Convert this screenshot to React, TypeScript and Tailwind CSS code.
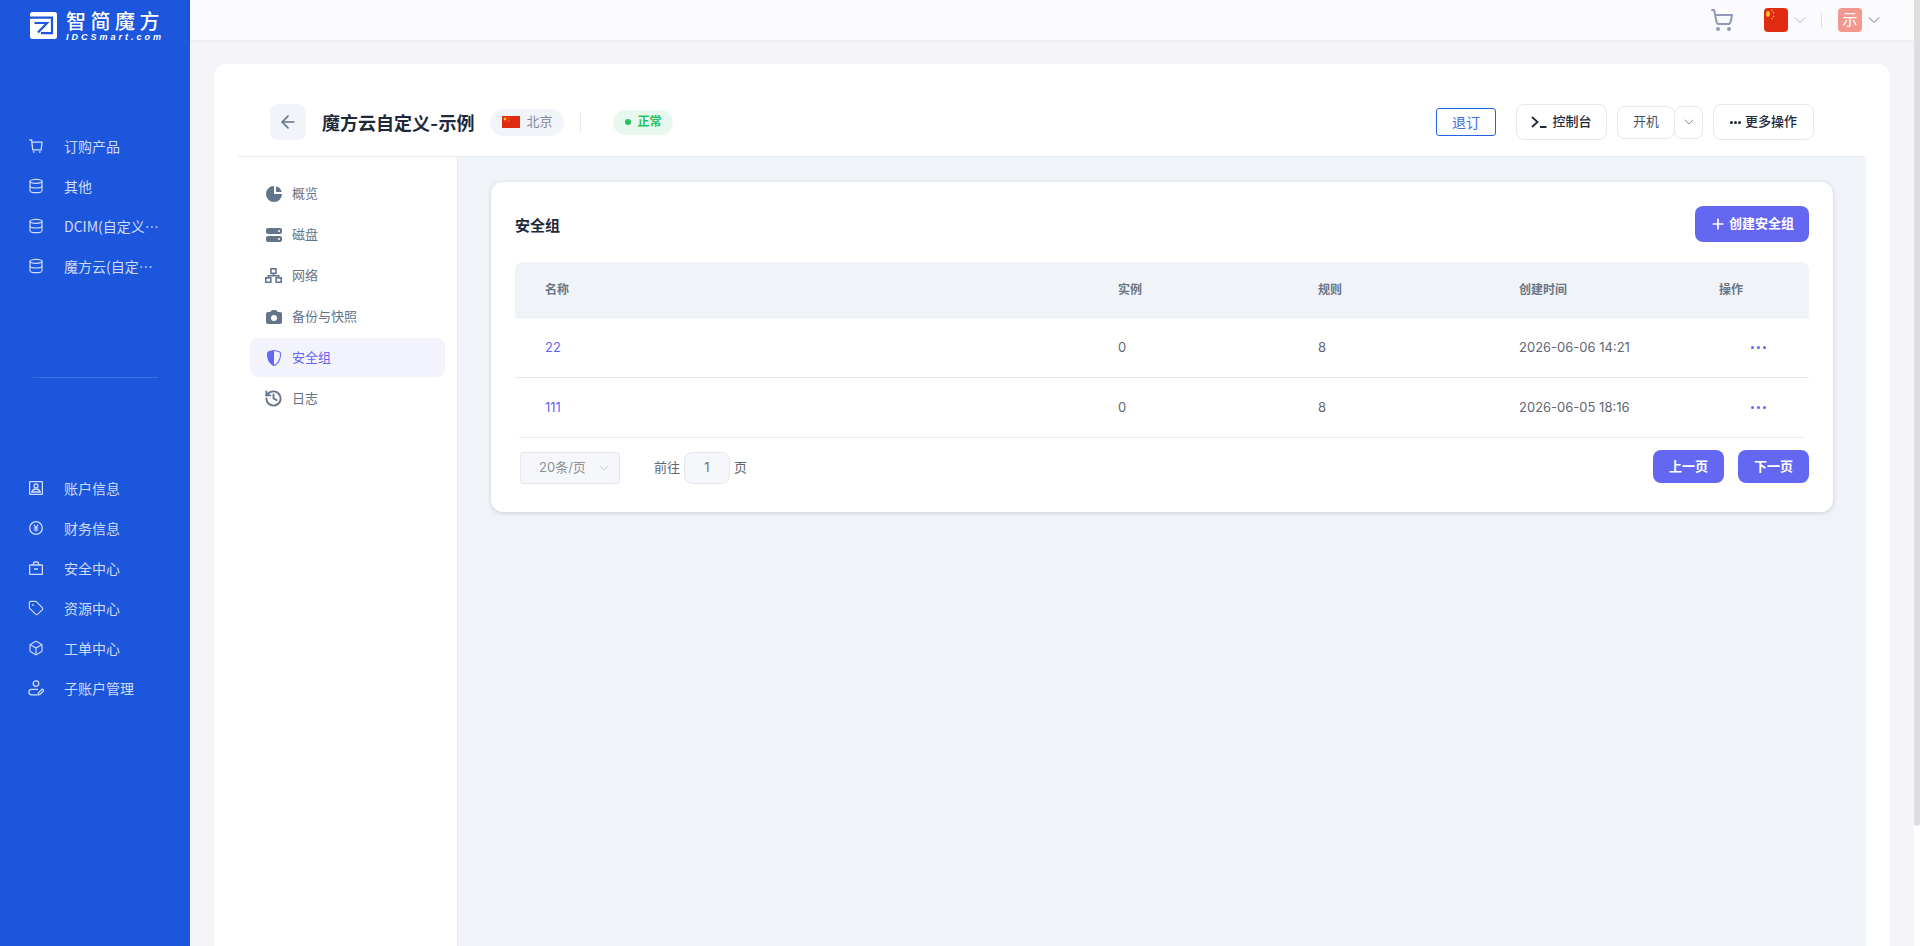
import { ArrowLeft, Box, ChevronDown, Database, History, Plus, ShoppingCart, Tag } from "lucide-react"
import { BsShieldShaded } from "react-icons/bs"
import { HiCamera, HiChartPie, HiServer } from "react-icons/hi"
import React from "react"

function CartThin() {
  return (
    <svg viewBox="0 0 14 14" className="h-[14px] w-[14px]" fill="none" stroke="currentColor" strokeWidth="1.3">
      <path d="M0.3 1H2.6L3.7 10.8H12.2L13 3.2H3" />
      <path d="M4 13h1.6M10 13h1.6" />
    </svg>
  )
}

function AccountIcon() {
  return (
    <svg viewBox="0 0 14 14" className="h-[14px] w-[14px]" fill="none" stroke="currentColor" strokeWidth="1.3">
      <rect x="0.6" y="0.6" width="12.8" height="12.8" rx="0.6" />
      <circle cx="7" cy="5" r="2" />
      <path d="M2.8 11c.6-2 2.2-3 4.2-3s3.6 1 4.2 3z" />
    </svg>
  )
}

function YenIcon() {
  return (
    <svg viewBox="0 0 14 14" className="h-[14px] w-[14px]" fill="none" stroke="currentColor" strokeWidth="1.3">
      <circle cx="7" cy="7" r="6.3" />
      <path d="M4.8 3.6L7 6.6l2.2-3M4.6 7h4.8M4.6 9h4.8M7 6.6v4" strokeWidth="1.1" />
    </svg>
  )
}

function SafeIcon() {
  return (
    <svg viewBox="0 0 14 14" className="h-[14px] w-[14px]" fill="none" stroke="currentColor" strokeWidth="1.3">
      <rect x="0.6" y="4" width="12.8" height="9.4" rx="0.6" />
      <path d="M4.4 4V2.6A1.6 1.6 0 0 1 6 1h2a1.6 1.6 0 0 1 1.6 1.6V4M5 8h4" />
    </svg>
  )
}

function SubAccountIcon() {
  return (
    <svg viewBox="0 0 16 16" className="h-[16px] w-[16px] shrink-0" fill="none" stroke="currentColor" strokeWidth="1.3">
      <circle cx="8" cy="3.6" r="2.8" />
      <path d="M10 9.4H3.6a2.7 2.7 0 0 0 0 5.4H9" />
      <path d="M10 14.8l.4-2 3.2-3.2a1 1 0 0 1 1.6 1.6L12 14.4z" />
    </svg>
  )
}

function NetworkIcon() {
  return (
    <svg viewBox="0 0 17 15" className="h-[15px] w-[17px] shrink-0" fill="none" stroke="currentColor" strokeWidth="1.6">
      <rect x="6" y="0.8" width="5" height="4.5" />
      <rect x="0.8" y="9.8" width="5" height="4.5" />
      <rect x="11.2" y="9.8" width="5" height="4.5" />
      <path d="M8.5 5.3v2.4M3.3 9.8V7.7h10.4v2.1" />
    </svg>
  )
}

function LogoMark() {
  return (
    <svg viewBox="0 0 27 27" className="h-[27px] w-[27px] shrink-0">
      <rect width="27" height="27" rx="2.5" fill="#fff" />
      <path d="M0 5.6H22V21.2H11" fill="none" stroke="#1b56dc" strokeWidth="2.2" />
      <path d="M4.5 11H17L8 20.5" fill="none" stroke="#1b56dc" strokeWidth="2.2" />
    </svg>
  )
}

function Flag({ className }: { className: string }) {
  return (
    <svg viewBox="0 0 30 20" preserveAspectRatio="none" className={className}>
      <rect width="30" height="20" fill="#e02a12" />
      <circle cx="5" cy="5" r="2.4" fill="#f5c518" />
      <circle cx="10" cy="2" r="0.8" fill="#f5c518" />
      <circle cx="12" cy="4" r="0.8" fill="#f5c518" />
      <circle cx="12" cy="7" r="0.8" fill="#f5c518" />
      <circle cx="10" cy="9" r="0.8" fill="#f5c518" />
    </svg>
  )
}

const dbIcon = <Database className="h-[16px] w-[16px] shrink-0" strokeWidth={1.7} />

const topMenu = [
  { icon: <CartThin />, label: "订购产品" },
  { icon: dbIcon, label: "其他" },
  { icon: dbIcon, label: "DCIM(自定义-示例)" },
  { icon: dbIcon, label: "魔方云(自定义-示例)" },
]

const bottomMenu = [
  { icon: <AccountIcon />, label: "账户信息" },
  { icon: <YenIcon />, label: "财务信息" },
  { icon: <SafeIcon />, label: "安全中心" },
  { icon: <Tag className="h-[16px] w-[16px] shrink-0" strokeWidth={1.7} />, label: "资源中心" },
  { icon: <Box className="h-[16px] w-[16px] shrink-0" strokeWidth={1.7} />, label: "工单中心" },
  { icon: <SubAccountIcon />, label: "子账户管理" },
]

const tabs = [
  { icon: <HiChartPie className="h-5 w-5 shrink-0" />, label: "概览" },
  { icon: <HiServer className="h-5 w-5 shrink-0" />, label: "磁盘" },
  { icon: <NetworkIcon />, label: "网络" },
  { icon: <HiCamera className="h-5 w-5 shrink-0" />, label: "备份与快照" },
  { icon: <BsShieldShaded className="h-4 w-4 shrink-0" />, label: "安全组", active: true },
  { icon: <History className="h-[19px] w-[19px] shrink-0" strokeWidth={2.4} />, label: "日志" },
]

const rows = [
  { name: "22", time: "2026-06-06 14:21" },
  { name: "111", time: "2026-06-05 18:16" },
]

function MenuRow({ icon, label }: { icon: React.ReactNode; label: string }) {
  return (
    <div className="flex h-10 items-center pl-[29px] text-[14px] text-[#d0dcfa]">
      <span className="flex w-[14px] justify-center">{icon}</span>
      <span className="ml-[21px] w-[96px] truncate">{label}</span>
    </div>
  )
}

function Sidebar() {
  return (
    <aside className="flex h-full w-[190px] shrink-0 flex-col bg-[#1b56dc] font-['Noto_Sans_CJK_SC',sans-serif]">
      <div className="flex h-[126px] items-start pl-[30px] pt-[12px] text-white">
        <LogoMark />
        <div className="-mt-[1px] ml-[9px] flex flex-col">
          <span className="h-[20px] whitespace-nowrap text-[20px] leading-[20px] font-medium tracking-[4.5px]">智简魔方</span>
          <span className="mt-[2px] whitespace-nowrap font-['Liberation_Sans',sans-serif] text-[9px] leading-[9px] font-bold tracking-[3px] italic">
            IDCSmart.com
          </span>
        </div>
      </div>
      <nav>
        {topMenu.map((m) => (
          <MenuRow key={m.label} icon={m.icon} label={m.label} />
        ))}
      </nav>
      <div className="mt-[91px] ml-[33px] h-[1px] w-[125px] bg-[#3b6de3]" />
      <nav className="mt-[90px]">
        {bottomMenu.map((m) => (
          <MenuRow key={m.label} icon={m.icon} label={m.label} />
        ))}
      </nav>
    </aside>
  )
}

function Topbar() {
  return (
    <header className="flex h-10 shrink-0 items-center justify-end bg-[#fbfbfd] pr-[30px] shadow-[0_1px_3px_rgba(30,41,59,0.07)]">
      <ShoppingCart className="h-6 w-6 text-[#8e9ab8]" strokeWidth={2} />
      <Flag className="ml-[30px] h-6 w-6 rounded-[4px]" />
      <ChevronDown className="ml-[2px] h-5 w-5 text-[#b9bec9]" strokeWidth={1.2} />
      <div className="ml-[11px] h-[15px] w-[1px] bg-[#dfe1e6]" />
      <div className="ml-[16px] flex h-6 w-6 items-center justify-center rounded-[4px] bg-[#f4978e] text-[15px] text-white">示</div>
      <ChevronDown className="ml-[2px] h-5 w-5 text-[#6b7280]" strokeWidth={1.2} />
    </header>
  )
}

function DetailHeader() {
  return (
    <div className="flex h-[93px] shrink-0 items-center border-b border-[#e5eaf1] pt-[24px] pl-[32px] pr-[52px]">
      <div className="flex h-9 w-9 items-center justify-center rounded-[8px] bg-[#f1f4f9] text-[#64748b]">
        <ArrowLeft className="h-5 w-5" strokeWidth={2} />
      </div>
      <h1 className="mt-[4px] ml-[16px] text-[18px] leading-[26px] font-semibold text-[#1e293b]">魔方云自定义-示例</h1>
      <div className="ml-[16px] flex h-[27px] w-[74px] items-center rounded-full bg-[#f1f4f9] pl-[12px] text-[13px] text-[#7f8898]">
        <Flag className="h-[12px] w-[18px]" />
        <span className="ml-[6px]">北京</span>
      </div>
      <div className="ml-[16px] h-[20px] w-[1px] bg-[#e2e8f0]" />
      <div className="ml-[32px] flex h-[25px] w-[60px] items-center rounded-full bg-[#e8f8ef] pl-[12px] text-[12px] font-semibold text-[#22c55e]">
        <span className="h-[6px] w-[6px] rounded-full bg-[#22c55e]" />
        <span className="ml-[6px]">正常</span>
      </div>
      <div className="ml-auto flex items-center">
        <button className="h-[28px] w-[60px] rounded-[3px] border border-[#2563eb] text-[14px] text-[#3b6fe6]">退订</button>
        <button className="ml-[20px] flex h-9 w-[91px] items-center justify-center rounded-[8px] border border-[#e2e8f0] text-[13px] font-medium text-[#1e293b]">
          <svg viewBox="0 0 16 12" className="mr-[5px] h-[12px] w-[16px]" fill="none" stroke="currentColor" strokeWidth="1.8">
            <path d="M1 1l5.5 5L1 11M9 11h6.5" />
          </svg>
          控制台
        </button>
        <button className="ml-[10px] h-[33px] w-[58px] rounded-[8px] border border-[#e2e8f0] text-[13px] text-[#475569]">开机</button>
        <button className="ml-[-1px] flex h-[33px] w-[29px] items-center justify-center rounded-[8px] border border-[#e2e8f0] text-[#64748b]">
          <ChevronDown className="h-4 w-4" strokeWidth={1.2} />
        </button>
        <button className="ml-[10px] flex h-9 w-[101px] items-center justify-center rounded-[8px] border border-[#e2e8f0] text-[13px] font-medium text-[#1e293b]">
          <span className="mr-[4px] flex gap-[1px]">
            <i className="h-[3px] w-[3px] rounded-full bg-[#1e293b]" />
            <i className="h-[3px] w-[3px] rounded-full bg-[#1e293b]" />
            <i className="h-[3px] w-[3px] rounded-full bg-[#1e293b]" />
          </span>
          更多操作
        </button>
      </div>
    </div>
  )
}

function SideTabs() {
  return (
    <div className="flex w-[220px] shrink-0 flex-col gap-[2px] border-r border-[#e5eaf1] pt-[17px] pl-[12px] pr-[12px]">
      {tabs.map((t) => (
        <div
          key={t.label}
          className={
            t.active
              ? "flex h-[39px] items-center rounded-[8px] bg-[#f3f3fd] pl-[15px] text-[13px] text-[#6366f1]"
              : "flex h-[39px] items-center rounded-[8px] pl-[15px] text-[13px] text-[#64748b]"
          }
        >
          <span className="flex w-[17px] justify-center">{t.icon}</span>
          <span className="ml-[10px]">{t.label}</span>
        </div>
      ))}
    </div>
  )
}

const colClass = "grid grid-cols-[573px_200px_201px_200px_1fr]"

function GroupCard() {
  return (
    <section className="rounded-[12px] bg-white px-[24px] pt-[24px] pb-[28px] shadow-[0_1px_4px_rgba(100,116,139,0.28)]">
      <div className="flex h-9 items-center justify-between">
        <h2 className="mt-[4px] text-[15px] font-semibold text-[#1e293b]">安全组</h2>
        <button className="flex h-9 w-[114px] items-center justify-center rounded-[8px] bg-[#6467f2] text-[13px] font-semibold text-white">
          <Plus className="mr-[3px] h-[16px] w-[16px]" strokeWidth={2.6} />
          创建安全组
        </button>
      </div>
      <div className={`${colClass} mt-[20px] h-[56px] items-center rounded-t-[8px] border-b border-[#e8ecf4] bg-[#f0f3f8] pt-[1px] text-[12px] font-semibold text-[#6b7685]`}>
        <span className="pl-[30px]">名称</span>
        <span className="pl-[30px]">实例</span>
        <span className="pl-[30px]">规则</span>
        <span className="pl-[30px]">创建时间</span>
        <span className="pl-[30px]">操作</span>
      </div>
      {rows.map((r, i) => (
        <div key={r.name}>
          <div className={`${colClass} items-center text-[13px] text-[#5f6773] ${i === 0 ? "h-[60px] border-b border-[#e3e7f0]" : "h-[59px]"}`}>
            <span className="pl-[30px] text-[#6366f1]">{r.name}</span>
            <span className="pl-[30px]">0</span>
            <span className="pl-[30px]">8</span>
            <span className="pl-[30px]">{r.time}</span>
            <span className="flex gap-[3px] pl-[62px]">
              <i className="h-[3px] w-[3px] rounded-full bg-[#6366f1]" />
              <i className="h-[3px] w-[3px] rounded-full bg-[#6366f1]" />
              <i className="h-[3px] w-[3px] rounded-full bg-[#6366f1]" />
            </span>
          </div>
          {i === 1 && <div className="mx-[4px] h-[1px] bg-[#e8ebf1]" />}
        </div>
      ))}
      <div className="mt-[12px] flex items-start text-[13px] text-[#606770]">
        <div className="mt-[2px] ml-[5px] flex h-[32px] w-[100px] items-center justify-between rounded-[3px] border border-[#e4e8f0] bg-[#f6f7fb] pr-[8px] pl-[18px] text-[#8f9196]">
          20条/页
          <ChevronDown className="h-[14px] w-[14px] text-[#a8adb8]" strokeWidth={1.2} />
        </div>
        <span className="mt-[2px] ml-[34px] leading-[30px]">前往</span>
        <div className="mt-[2px] ml-[4px] flex h-[32px] w-[46px] items-center justify-center rounded-[8px] border border-[#e4e8f0] bg-[#f6f7fb] text-[#6b7280]">1</div>
        <span className="mt-[2px] ml-[4px] leading-[30px]">页</span>
        <button className="ml-auto h-[33px] w-[71px] rounded-[8px] bg-[#6467f2] text-[13px] font-semibold text-white">上一页</button>
        <button className="ml-[14px] h-[33px] w-[71px] rounded-[8px] bg-[#6467f2] text-[13px] font-semibold text-white">下一页</button>
      </div>
    </section>
  )
}

export default function App() {
  return (
    <div className="flex h-[946px] w-[1920px] overflow-hidden bg-[#f5f5f9] font-['Inter','Noto_Sans_CJK_SC',sans-serif]">
      <Sidebar />
      <main className="flex min-w-0 flex-1 flex-col">
        <Topbar />
        <div className="mx-[24px] mt-[24px] flex min-h-0 flex-1 flex-col rounded-t-[12px] bg-white">
          <div className="mx-[24px] flex min-h-0 flex-1 flex-col">
            <DetailHeader />
            <div className="flex min-h-0 flex-1">
              <SideTabs />
              <div className="flex-1 bg-[#f0f3f8] pt-[25px] pr-[33px] pl-[33px]">
                <GroupCard />
              </div>
            </div>
          </div>
        </div>
      </main>
      <div className="w-[6px] shrink-0 bg-white">
        <div className="h-[826px] rounded-b-[3px] bg-[#dedede]" />
      </div>
    </div>
  )
}
